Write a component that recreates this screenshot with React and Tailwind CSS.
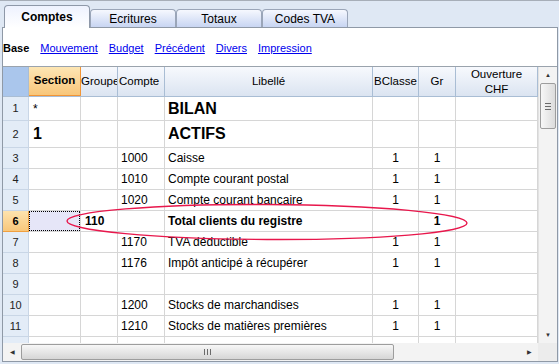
import React from 'react';

const font = { fontFamily: '"Liberation Sans", Arial, sans-serif' };

// column widths incl. right grid line
const COLS = 'grid-cols-[26px_52px_37px_47px_208px_46px_37px_82px]';

const rows = [
  { n: '1', h: 'h-[24px]', section: '*', libelle: 'BILAN', big: true },
  { n: '2', h: 'h-[27px]', section: '1', libelle: 'ACTIFS', big: true, bigSection: true },
  { n: '3', compte: '1000', libelle: 'Caisse', bc: '1', gr: '1' },
  { n: '4', compte: '1010', libelle: 'Compte courant postal', bc: '1', gr: '1' },
  { n: '5', compte: '1020', libelle: 'Compte courant bancaire', bc: '1', gr: '1' },
  { n: '6', groupe: '110', libelle: 'Total clients du registre', gr: '1', total: true },
  { n: '7', compte: '1170', libelle: 'TVA déductible', bc: '1', gr: '1' },
  { n: '8', compte: '1176', libelle: 'Impôt anticipé à récupérer', bc: '1', gr: '1' },
  { n: '9' },
  { n: '10', compte: '1200', libelle: 'Stocks de marchandises', bc: '1', gr: '1' },
  { n: '11', compte: '1210', libelle: 'Stocks de matières premières', bc: '1', gr: '1' },
];

const Tab = ({ label, active }) =>
  active ? (
    <div className="relative z-10 -mb-px flex h-[23px] w-[86px] items-center justify-center rounded-t-[4px] border border-b-0 border-[#8e98a8] bg-gradient-to-b from-[#eef2fe] to-white text-[12px] font-bold text-black">
      {label}
    </div>
  ) : (
    <div className="flex h-[18px] w-[86px] items-center justify-center rounded-t-[4px] border border-b-0 border-[#9aa5b8] bg-gradient-to-b from-[#f6f8fe] to-[#c8d5f2] text-[12px] text-black">
      {label}
    </div>
  );

const cell = 'border-r border-b border-[#d6d6d6] flex items-center overflow-hidden whitespace-nowrap text-[12px] text-black';

const Row = ({ r }) => {
  const h = r.h || 'h-[21px]';
  return (
    <div className={`grid ${COLS} ${h}`}>
      <div
        className={`flex items-center justify-center border-r border-b text-[11px] ${
          r.total
            ? 'border-[#f0a040] bg-gradient-to-b from-[#fde3ae] to-[#f9c77a] font-bold text-black'
            : 'border-[#c9d6e6] bg-[#e3ecf7] text-[#222]'
        }`}
      >
        {r.n}
      </div>
      {r.total ? (
        <div className="border-r border-b border-[#d6d6d6] p-0">
          <div className="h-full w-full border border-dotted border-black bg-[#e6e6f8]" />
        </div>
      ) : (
        <div className={`${cell} pl-[4px] ${r.bigSection ? 'text-[16px] font-bold' : ''} ${r.section === '*' ? 'items-start pt-[3px]' : ''}`}>
          {r.section}
        </div>
      )}
      <div className={`${cell} pl-[4px] ${r.total ? 'font-bold' : ''}`}>{r.groupe}</div>
      <div className={`${cell} pl-[3px]`}>{r.compte}</div>
      <div className={`${cell} pl-[3px] ${r.big ? 'text-[16px] font-bold' : ''} ${r.total ? 'font-bold' : ''}`}>{r.libelle}</div>
      <div className={`${cell} justify-center`}>{r.bc}</div>
      <div className={`${cell} justify-center ${r.total ? 'font-bold' : ''}`}>{r.gr}</div>
      <div className={cell} />
    </div>
  );
};

const Head = ({ children, className = '' }) => (
  <div className={`flex items-center overflow-hidden whitespace-nowrap border-r border-[#a9bdd4] bg-gradient-to-b from-[#f7f9fd] to-[#dbe4f1] text-[11.5px] text-black ${className}`}>
    {children}
  </div>
);

export default function App() {
  return (
    <div className="relative h-[364px] w-[559px] overflow-hidden border-t border-[#a7aeb8] bg-[#dfe8f4]" style={font}>
      {/* tabs */}
      <div className="flex h-[26px] items-end pl-[4px]">
        <Tab label="Comptes" active />
        <Tab label="Ecritures" />
        <Tab label="Totaux" />
        <Tab label="Codes TVA" />
      </div>

      {/* panel */}
      <div className="ml-[2px] flex h-[335px] w-[556px] flex-col border border-[#8f99a6] bg-white">
        {/* sub views */}
        <div className="flex h-[38px] items-center gap-[11px] pt-[3px] text-[11px]">
          <span className="font-bold text-black">Base</span>
          {['Mouvement', 'Budget', 'Précédent', 'Divers', 'Impression'].map((l) => (
            <span key={l} className="text-[#0000ee] underline">
              {l}
            </span>
          ))}
        </div>

        <div className="flex h-[277px] border-t border-[#9aa3ad]">
          <div className="w-[535px] overflow-hidden">
            {/* header */}
            <div className={`grid ${COLS} h-[30px] border-b border-[#a9bdd4]`}>
              <div className="border-r border-[#a9bdd4] bg-[#aac6ec]" />
              <Head className="justify-center border-b border-r-[#f29536] border-b-[#f29536] bg-gradient-to-b from-[#fde6b4] to-[#f8c67a] font-bold">
                Section
              </Head>
              <Head>Groupe</Head>
              <Head className="pl-[1px]">Compte</Head>
              <Head className="justify-center">Libellé</Head>
              <Head className="justify-center">BClasse</Head>
              <Head className="justify-center">Gr</Head>
              <Head className="flex-col justify-center leading-[15px]">
                <span>Ouverture</span>
                <span>CHF</span>
              </Head>
            </div>
            {rows.map((r) => (
              <Row key={r.n} r={r} />
            ))}
            <div className={`grid ${COLS} h-[6px]`}>
              <div className="border-r border-[#c9d6e6] bg-[#e3ecf7]" />
              {[0, 1, 2, 3, 4, 5, 6].map((i) => (
                <div key={i} className="border-r border-[#d6d6d6]" />
              ))}
            </div>
          </div>

          {/* vertical scrollbar */}
          <div className="flex w-[19px] flex-col items-center border-l border-[#e2e2e2] bg-[#f3f3f3]">
            <div className="flex h-[16px] items-center justify-center text-[6px] text-[#333]">▲</div>
            <div className="flex h-[46px] w-[16px] flex-col items-center justify-center gap-[2px] rounded-[2px] border border-[#9d9d9d] bg-gradient-to-r from-[#f7f7f7] to-[#dcdcdc]">
              <div className="h-px w-[6px] bg-[#6b6b6b]" />
              <div className="h-px w-[6px] bg-[#6b6b6b]" />
              <div className="h-px w-[6px] bg-[#6b6b6b]" />
            </div>
            <div className="flex-1" />
            <div className="flex h-[16px] items-center justify-center text-[6px] text-[#333]">▼</div>
          </div>
        </div>

        {/* horizontal scrollbar */}
        <div className="flex h-[18px]">
          <div className="flex w-[535px] items-center bg-[#f3f3f3]">
            <div className="flex w-[18px] items-center justify-center text-[6px] text-[#333]">◀</div>
            <div className="flex h-[16px] w-[373px] items-center justify-center gap-[2px] rounded-[2px] border border-[#9d9d9d] bg-gradient-to-b from-[#f7f7f7] to-[#d6d6d6]">
              <div className="h-[6px] w-px bg-[#6b6b6b]" />
              <div className="h-[6px] w-px bg-[#6b6b6b]" />
              <div className="h-[6px] w-px bg-[#6b6b6b]" />
            </div>
            <div className="flex-1" />
            <div className="flex w-[18px] items-center justify-center text-[6px] text-[#333]">▶</div>
          </div>
          <div className="w-[19px] bg-[#ececec]" />
        </div>
      </div>

      {/* red annotation ellipse */}
      <svg className="pointer-events-none absolute left-0 top-0" width="559" height="364">
        <ellipse cx="267" cy="221" rx="200" ry="17.5" fill="none" stroke="#e8174c" strokeWidth="1.4" transform="rotate(0.3 267 221)" />
      </svg>
    </div>
  );
}
